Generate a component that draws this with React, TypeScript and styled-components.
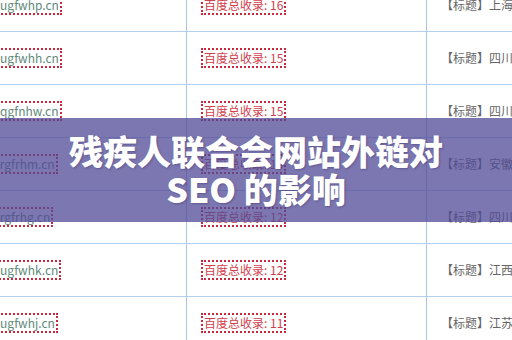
import styled, { createGlobalStyle } from "styled-components";

const GlobalStyle = createGlobalStyle`
  html, body {
    margin: 0;
    padding: 0;
    background: #fff;
  }
  body {
    font-family: "Noto Sans CJK SC", "Noto Sans", sans-serif;
  }
`;

const rows = [
  { site: "www.bugfwhp.cn", count: 16, title: "上海" },
  { site: "www.bugfwhh.cn", count: 15, title: "四川" },
  { site: "www.pqgfnhw.cn", count: 15, title: "四川" },
  { site: "www.orgfrhm.cn", count: 13, title: "安徽" },
  { site: "www.orgfrhg.cn", count: 12, title: "四川" },
  { site: "www.bugfwhk.cn", count: 12, title: "江西" },
  { site: "www.bugfwhj.cn", count: 11, title: "江苏" },
];

const App: React.FC = () => {
  return (
    <>
      <GlobalStyle />
      <StyledPage>
        <StyledTable>
          {rows.map((row, i) => (
            <StyledRow key={i}>
              <StyledSiteCell>
                <StyledSiteBox>{row.site}</StyledSiteBox>
              </StyledSiteCell>
              <StyledCountCell>
                <StyledCountBox>百度总收录: {row.count}</StyledCountBox>
              </StyledCountCell>
              <StyledTitleCell>【标题】{row.title}省残疾人联合会</StyledTitleCell>
            </StyledRow>
          ))}
        </StyledTable>
        <StyledBanner>
          <h1>
            残疾人联合会网站外链对
            <br />
            SEO 的影响
          </h1>
        </StyledBanner>
      </StyledPage>
    </>
  );
};

const StyledPage = styled.div`
  position: relative;
  width: 512px;
  height: 340px;
  overflow: hidden;
`;

const StyledTable = styled.div`
  display: flex;
  flex-direction: column;
  margin-top: -21px;
`;

const StyledRow = styled.div`
  display: grid;
  grid-template-columns: 187px 240px 1fr;
  height: 52px;
  border-bottom: 1px solid #b5cfec;
  font-size: 12px;
  line-height: 16px;
`;

const StyledCell = styled.div`
  display: flex;
  align-items: center;
  padding-left: 14px;
  border-right: 1px solid #a8c6e8;
  overflow: hidden;
  white-space: nowrap;
`;

const StyledSiteCell = styled(StyledCell)`
  padding-left: 0;
`;

const StyledCountCell = styled(StyledCell)``;

const StyledTitleCell = styled(StyledCell)`
  border-right: none;
  padding-left: 14px;
  color: #666;
`;

const StyledSiteBox = styled.span`
  margin-left: -42px;
  padding: 0 1px;
  border: 2px dotted #c8283c;
  color: #5f8a7a;
`;

const StyledCountBox = styled.span`
  padding: 0 1px;
  border: 2px dotted #c8283c;
  color: #d2404c;
`;

const StyledBanner = styled.div`
  position: absolute;
  left: 0;
  right: 0;
  top: 118px;
  height: 104px;
  display: flex;
  align-items: center;
  justify-content: center;
  background: rgba(80, 74, 150, 0.75);

  > h1 {
    margin: 0;
    color: #fff;
    font-family: "Noto Sans CJK SC", sans-serif;
    font-weight: 900;
    font-size: 34px;
    line-height: 38px;
    text-align: center;
    text-shadow: 1px 1px 2px rgba(40, 30, 90, 0.35);
  }
`;

export default App;
